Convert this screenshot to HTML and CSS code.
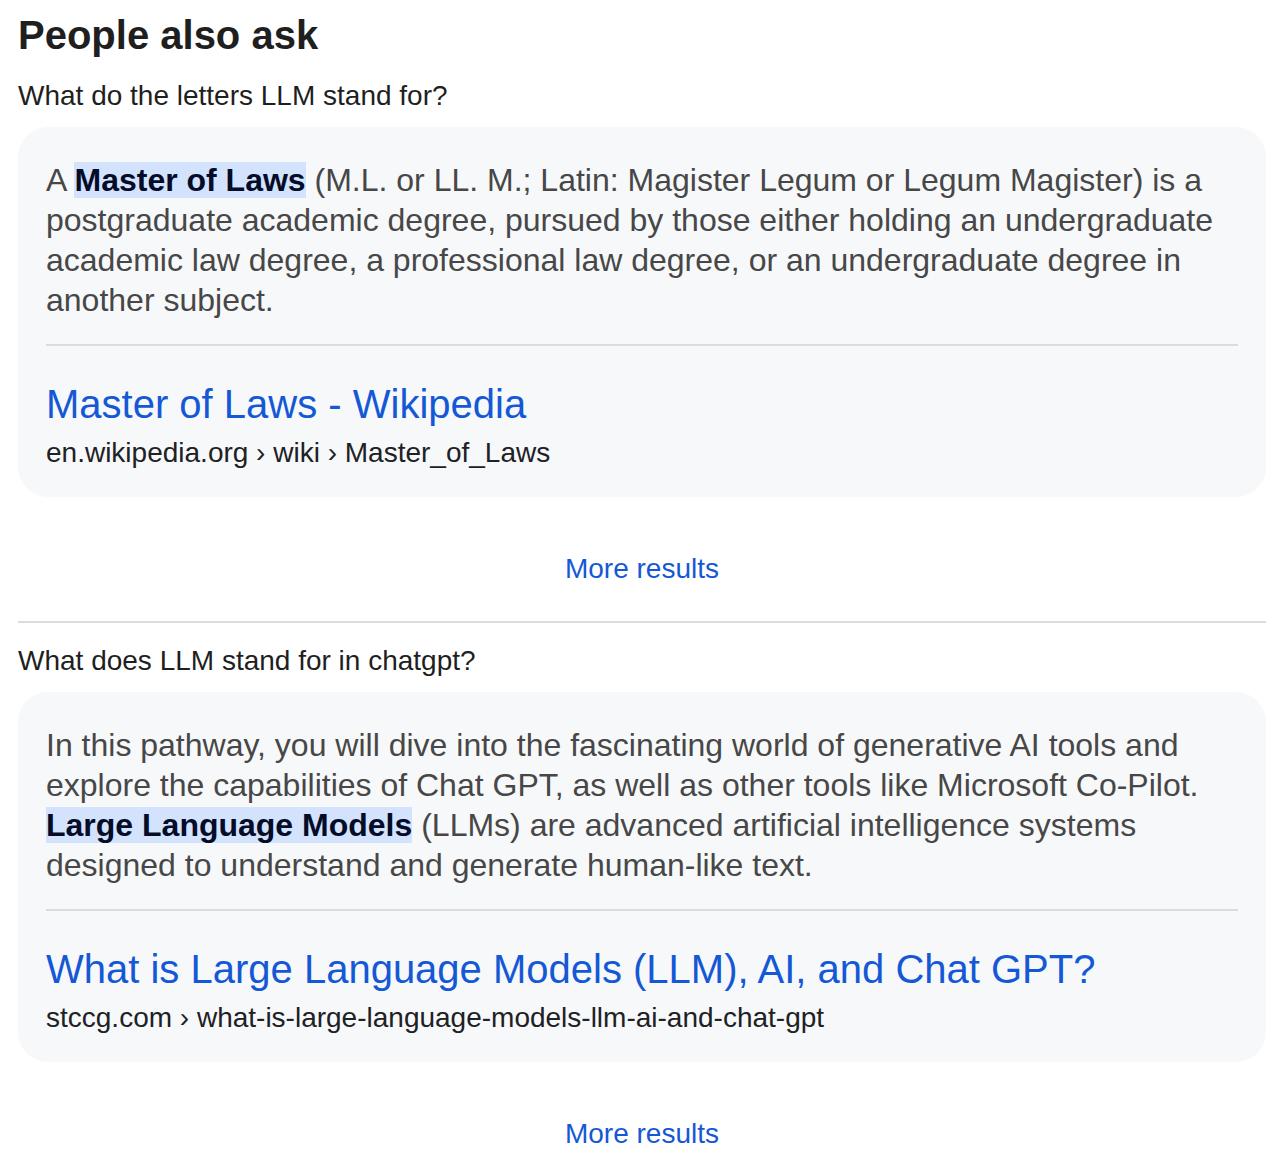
FILE: index.html
```html
<!DOCTYPE html>
<html lang="en">

<head>
    <meta charset="UTF-8">
    <meta name="viewport" content="width=device-width, initial-scale=1.0">
    <title>People also ask</title>
    <link rel="stylesheet" href="styles.css">
</head>

<body>

    <div class="paa">
        <h2 class="paa-heading">People also ask</h2>

        <div class="paa-item">
            <div class="question">What do the letters LLM stand for?</div>
            <div class="answer-card">
                <div class="snippet">
                    A <b class="hl">Master of Laws</b> (M.L. or LL. M.; Latin: Magister Legum or Legum Magister) is a
                    postgraduate academic degree, pursued by those either holding an undergraduate academic law
                    degree, a professional law degree, or an undergraduate degree in another subject.
                </div>
                <div class="card-divider"></div>
                <a class="result-title" href="#">Master of Laws - Wikipedia</a>
                <div class="result-url">en.wikipedia.org › wiki › Master_of_Laws</div>
            </div>
            <a class="more-results" href="#">More results</a>
        </div>

        <div class="item-divider"></div>

        <div class="paa-item">
            <div class="question">What does LLM stand for in chatgpt?</div>
            <div class="answer-card">
                <div class="snippet">
                    In this pathway, you will dive into the fascinating world of generative AI tools and explore the
                    capabilities of Chat GPT, as well as other tools like Microsoft Co-Pilot.
                    <b class="hl">Large Language Models</b> (LLMs) are advanced artificial intelligence systems
                    designed to understand and generate human-like text.
                </div>
                <div class="card-divider"></div>
                <a class="result-title" href="#">What is Large Language Models (LLM), AI, and Chat GPT?</a>
                <div class="result-url">stccg.com › what-is-large-language-models-llm-ai-and-chat-gpt</div>
            </div>
            <a class="more-results" href="#">More results</a>
        </div>
    </div>

</body>

</html>
```

FILE: styles.css
```css
body {
    margin: 0;
    background-color: #fff;
    font-family: "Liberation Sans", Arial, sans-serif;
    color: #1f1f1f;
}

.paa {
    padding: 11px 18px 0 18px;
}

.paa-heading {
    margin: 0;
    font-size: 40px;
    line-height: 48px;
    font-weight: bold;
    color: #1f1f1f;
}

.paa-item {
    display: flex;
    flex-direction: column;
}

.question {
    margin-top: 19px;
    font-size: 28px;
    line-height: 36px;
    color: #1f1f1f;
}

.item-divider + .paa-item .question {
    margin-top: 20px;
}

.answer-card {
    margin-top: 13px;
    padding: 33px 28px 27px 28px;
    background-color: #f7f8fa;
    border-radius: 30px;
    display: flex;
    flex-direction: column;
}

.snippet {
    font-size: 32px;
    line-height: 40px;
    color: #474747;
}

.hl {
    background-color: #d3e3fd;
    color: #040c28;
}

.card-divider {
    margin-top: 24px;
    height: 2px;
    background-color: #dadce0;
}

.result-title {
    margin-top: 36px;
    font-size: 40px;
    line-height: 44px;
    color: #1558d6;
    text-decoration: none;
}

.result-url {
    margin-top: 10px;
    font-size: 28px;
    line-height: 34px;
    color: #202124;
}

.more-results {
    margin-top: 54px;
    align-self: center;
    font-size: 28px;
    line-height: 36px;
    color: #1558d6;
    text-decoration: none;
}

.item-divider {
    margin-top: 34px;
    height: 2px;
    background-color: #dadce0;
}
```
